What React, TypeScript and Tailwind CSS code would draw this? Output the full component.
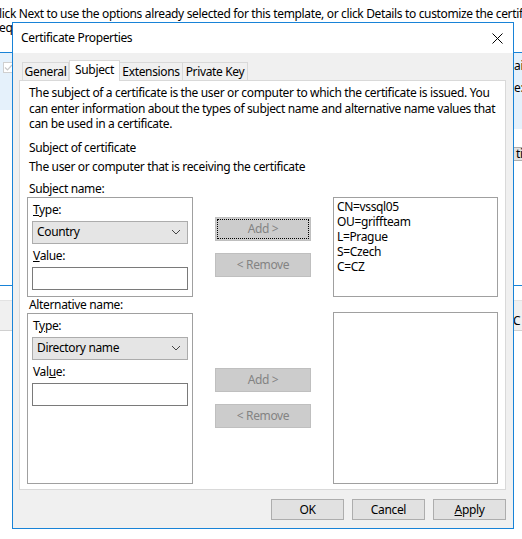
import React from 'react';

const font = "font-['Noto_Sans','Liberation_Sans',sans-serif]";

const Chevron: React.FC = () => (
  <svg width="10" height="6" viewBox="0 0 10 6" className="shrink-0">
    <polyline points="1,1 5,5 9,1" fill="none" stroke="#444" strokeWidth="1" />
  </svg>
);

const Combo: React.FC<{ value: string }> = ({ value }) => (
  <div className="h-[23px] w-[156px] bg-[#e5e5e5] border border-[#acacac] flex items-center justify-between pl-[4px] pr-[6px]">
    <span>{value}</span>
    <Chevron />
  </div>
);

const Input: React.FC = () => <div className="h-[23px] w-[156px] bg-white border border-[#7a7a7a]" />;

const DisabledButton: React.FC<{ label: string; focused?: boolean }> = ({ label, focused }) => (
  <div
    className={`h-[24px] w-[96px] bg-[#cccccc] border border-[#bfbfbf] flex items-center justify-center text-[#838383] ${
      focused ? 'outline outline-1 outline-dotted outline-black -outline-offset-[3px]' : ''
    }`}
  >
    {label}
  </div>
);

const GroupBox: React.FC<{ typeLabel: React.ReactNode; valueLabel: React.ReactNode; combo: string; height: string }> = ({
  typeLabel,
  valueLabel,
  combo,
  height,
}) => (
  <div className={`w-[166px] ${height} border border-[#a0a0a0] px-[4px] pt-[4px]`}>
    <div className="leading-[15px] pl-[1px]">{typeLabel}</div>
    <div className="mt-[4px]">
      <Combo value={combo} />
    </div>
    <div className="leading-[15px] pl-[1px] mt-[4px]">{valueLabel}</div>
    <div className="mt-[4px]">
      <Input />
    </div>
  </div>
);

const DialogButton: React.FC<{ children: React.ReactNode }> = ({ children }) => (
  <div className="h-[21px] w-[73px] bg-[#e1e1e1] border border-[#adadad] flex items-center justify-center">{children}</div>
);

export default function App() {
  return (
    <div className={`relative w-[522px] h-[539px] bg-white overflow-hidden text-[12px] tracking-[-0.35px] text-black ${font}`}>
      {/* background wizard window */}
      <div className="absolute left-0 top-0 w-[522px] h-[539px]">
        <div className="absolute left-[-1px] top-[7px] whitespace-nowrap leading-[14px]">
          lick Next to use the options already selected for this template, or click Details to customize the certif
        </div>
        <div className="absolute left-[-1px] top-[21px] whitespace-nowrap leading-[14px]">equ</div>
        <div className="absolute left-0 top-[52px] w-[522px] h-[58px] bg-[#e5f1fb] border-t border-[#1883d7]" />
        <div className="absolute left-[500px] top-[53px] w-[22px] h-[76px] bg-[#e5f1fb]" />
        <div className="absolute left-[3px] top-[62px] w-[11px] h-[11px] border border-[#cfcfcf] bg-white flex items-center justify-center">
          <svg width="9" height="9" viewBox="0 0 9 9">
            <polyline points="1,4.5 3.5,7 8,2" fill="none" stroke="#c8c8c8" strokeWidth="1.2" />
          </svg>
        </div>
        <div className="absolute left-[514px] top-[58px] leading-[15px]">ai</div>
        <div className="absolute left-[514px] top-[80px] leading-[15px]">e:</div>
        <div className="absolute left-[513px] top-[147px] w-[20px] h-[14px] bg-[#e1e1e1] border border-[#adadad] pl-[2px] leading-[12px]">
          ti
        </div>
        <div className="absolute left-0 top-[285px] w-[522px] border-t border-[#1883d7]" />
        <div className="absolute left-0 top-[300px] w-[522px] h-[30px] bg-[#f0f0f0] border-t border-[#e3e3e3]" />
        <div className="absolute left-0 top-[330px] w-[522px] border-t border-[#d0d0d0]" />
        <div className="absolute left-[513px] top-[313px] leading-[15px]">C</div>
      </div>

      {/* dialog window */}
      <div className="absolute left-[12px] top-[22px] w-[502px] h-[507px] border border-[#1883d7] bg-[#f0f0f0] flex flex-col">
        <div className="h-[30px] bg-white flex items-center justify-between pl-[8px] pr-[10px] shrink-0">
          <span>Certificate Properties</span>
          <svg width="11" height="11" viewBox="0 0 11 11">
            <path d="M0.5 0.5 L10.5 10.5 M10.5 0.5 L0.5 10.5" stroke="#000" strokeWidth="1" />
          </svg>
        </div>

        <div className="px-[6px] pt-[7px]">
          {/* tabs */}
          <div className="flex items-end h-[20px] pl-[3px] relative z-10">
            <div className="h-[18px] w-[47px] border border-[#d9d9d9] border-b-0 bg-[#f0f0f0] flex items-center justify-center">General</div>
            <div className="h-[21px] w-[51px] border border-[#d9d9d9] border-b-0 bg-white flex items-center justify-center mb-[-1px] pb-[2px]">Subject</div>
            <div className="h-[18px] w-[63px] border border-[#d9d9d9] border-b-0 border-l-0 bg-[#f0f0f0] flex items-center justify-center">Extensions</div>
            <div className="h-[18px] w-[65px] border border-[#d9d9d9] border-b-0 border-l-0 bg-[#f0f0f0] flex items-center justify-center">Private Key</div>
          </div>

          {/* tab panel */}
          <div className="h-[410px] w-[487px] bg-white border border-[#d9d9d9] px-[7px] pt-[4px]">
            <div className="pl-[2px] leading-[15.5px] whitespace-nowrap">
              The subject of a certificate is the user or computer to which the certificate is issued. You
              <br />
              can enter information about the types of subject name and alternative name values that
              <br />
              can be used in a certificate.
            </div>
            <div className="pl-[2px] leading-[15px] mt-[8px]">Subject of certificate</div>
            <div className="pl-[2px] leading-[15px] mt-[4px]">The user or computer that is receiving the certificate</div>
            <div className="pl-[2px] leading-[15px] mt-[7px]">Subject name:</div>

            <div className="flex mt-[1px]">
              <GroupBox
                height="h-[100px]"
                typeLabel={
                  <span>
                    <span className="underline">T</span>ype:
                  </span>
                }
                valueLabel={
                  <span>
                    <span className="underline">V</span>alue:
                  </span>
                }
                combo="Country"
              />
              <div className="ml-[22px] pt-[20px] flex flex-col gap-[12px]">
                <DisabledButton label="Add >" focused />
                <DisabledButton label="< Remove" />
              </div>
              <div className="ml-[22px] w-[166px] h-[100px] border border-[#a0a0a0] pl-[3px] pt-[1px] leading-[15px]">
                <div>CN=vssql05</div>
                <div>OU=griffteam</div>
                <div>L=Prague</div>
                <div>S=Czech</div>
                <div>C=CZ</div>
              </div>
            </div>

            <div className="pl-[2px] leading-[15px]">Alternative name:</div>
            <div className="flex mt-[1px]">
              <GroupBox
                height="h-[171px]"
                typeLabel={
                  <span>
                    T<span className="underline">y</span>pe:
                  </span>
                }
                valueLabel={
                  <span>
                    Val<span className="underline">u</span>e:
                  </span>
                }
                combo="Directory name"
              />
              <div className="ml-[22px] pt-[55px] flex flex-col gap-[12px]">
                <DisabledButton label="Add >" />
                <DisabledButton label="< Remove" />
              </div>
              <div className="ml-[22px] w-[166px] h-[172px] mt-[-1px] border border-[#a0a0a0]" />
            </div>
          </div>
        </div>

        <div className="flex justify-end gap-[8px] pr-[7px] mt-[9px]">
          <DialogButton>OK</DialogButton>
          <DialogButton>Cancel</DialogButton>
          <DialogButton>
            <span>
              <span className="underline">A</span>pply
            </span>
          </DialogButton>
        </div>
      </div>
    </div>
  );
}
